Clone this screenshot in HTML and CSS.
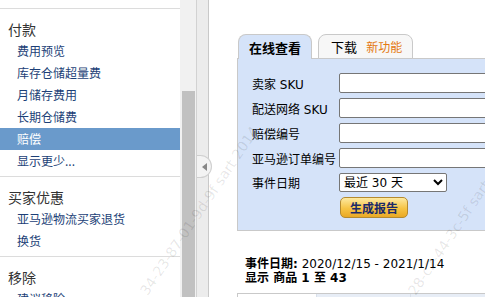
FILE: index.html
```html
<!DOCTYPE html>
<html>
<head>
    <title>赔偿</title>
    <link rel="stylesheet" href="styles.css">
</head>
<body>
    <!-- 左侧菜单 -->
    <div class="sidebar">
        <div class="menu-section">
            <div class="menu-title">付款</div>
            <div class="menu-item">费用预览</div>
            <div class="menu-item">库存仓储超量费</div>
            <div class="menu-item">月储存费用</div>
            <div class="menu-item">长期仓储费</div>
            <div class="menu-item selected">赔偿</div>
            <div class="menu-item">显示更少...</div>
        </div>
        <div class="menu-section">
            <div class="menu-title">买家优惠</div>
            <div class="menu-item">亚马逊物流买家退货</div>
            <div class="menu-item">换货</div>
        </div>
        <div class="menu-section">
            <div class="menu-title">移除</div>
            <div class="menu-item">建议移除</div>
        </div>
    </div>

    <div class="scrollbar">
        <div class="scroll-thumb"></div>
    </div>

    <div class="splitter"></div>
    <div class="collapse-handle"><span class="arrow-left"></span></div>

    <!-- 报告区域 -->
    <div class="main">
        <div class="tabs">
            <div class="tab active">在线查看</div>
            <div class="tab">下载 <span class="new-feature">新功能</span></div>
        </div>
        <div class="panel">
            <div class="form-grid">
                <label>卖家 SKU</label>
                <input type="text">
                <label>配送网络 SKU</label>
                <input type="text">
                <label>赔偿编号</label>
                <input type="text">
                <label>亚马逊订单编号</label>
                <input type="text">
                <label>事件日期</label>
                <select>
                    <option>最近 30 天</option>
                </select>
                <span></span>
                <div><button class="report-btn">生成报告</button></div>
            </div>
        </div>

        <div class="summary">
            <div><b>事件日期:</b> 2020/12/15 - 2021/1/14</div>
            <div><b>显示 商品 1 至 43</b></div>
        </div>

        <div class="table-head">
            <div class="th"></div>
            <div class="th blue"></div>
            <div class="th blue"></div>
        </div>
    </div>

    <!-- 水印 -->
    <span class="watermark wm-1">34-23-87-01-9d-9f sart 2014</span>
    <span class="watermark wm-2">9f sart 20114</span>
    <span class="watermark wm-3">28-c2-44-3c-5f sart</span>
</body>
</html>
```

FILE: styles.css
```css
body {
    margin: 0;
    height: 297px;
    overflow: hidden;
    display: flex;
    font-family: 'DejaVu Sans', 'Noto Sans CJK SC', sans-serif;
    font-size: 12px;
    color: #000;
    background-color: #fff;
}

/* 左侧菜单 */
.sidebar {
    width: 180px;
    flex-shrink: 0;
    padding-top: 8px;
    font-family: 'Noto Sans CJK SC', sans-serif;
}

.menu-section {
    border-top: 1px solid #dcdcdc;
    padding: 9px 0 4px;
}

.menu-title {
    font-size: 14px;
    line-height: 22px;
    color: #333;
    padding-left: 8px;
}

.menu-item {
    line-height: 22px;
    padding-left: 17px;
    color: #1c3f77;
}

.menu-item.selected {
    background-color: #6a9acb;
    color: #fff;
}

.scrollbar {
    width: 16px;
    flex-shrink: 0;
    background-color: #f1f1f1;
    padding-top: 91px;
    box-sizing: border-box;
}

.scroll-thumb {
    width: 13px;
    height: 260px;
    margin-left: 2px;
    background-color: #c1c1c1;
}

.splitter {
    width: 11px;
    flex-shrink: 0;
    background-color: #ececec;
    border-left: 1px solid #d2d2d2;
    border-right: 1px solid #c9c9c9;
}

.collapse-handle {
    position: absolute;
    left: 197px;
    top: 155px;
    width: 15px;
    height: 23px;
    box-sizing: border-box;
    background-color: #f3f3f3;
    border: 1px solid #cfcfcf;
    border-left: none;
    border-radius: 0 12px 12px 0;
    display: flex;
    align-items: center;
    padding-left: 5px;
}

.arrow-left {
    width: 0;
    height: 0;
    border-top: 4px solid transparent;
    border-bottom: 4px solid transparent;
    border-right: 5px solid #888;
}

/* 报告区域 */
.main {
    flex: 1;
    padding: 34px 0 0 28px;
    min-width: 0;
}

.tabs {
    display: flex;
    gap: 6px;
    margin-left: 1px;
    margin-bottom: -1px;
}

.tab {
    font-size: 13px;
    line-height: 16px;
    padding: 5px 10px 2px 12px;
    border: 1px solid #c9c9c9;
    border-radius: 8px 8px 0 0;
    background-color: #f7f7f7;
    white-space: nowrap;
}

.tab.active {
    position: relative;
    z-index: 1;
    padding: 5px 10px 3px 10px;
    border-bottom: none;
    background-color: #d5e3f9;
    font-weight: bold;
    font-family: 'Noto Sans CJK SC', sans-serif;
}

.new-feature {
    font-size: 12px;
    color: #e47911;
    margin-left: 5px;
}

.panel {
    width: 300px;
    border: 1px solid #c9c9c9;
    background-color: #d5e3f9;
    padding: 14px 0 12px 14px;
}

.form-grid {
    display: grid;
    grid-template-columns: 87px 1fr;
    row-gap: 5px;
    align-items: center;
}

.form-grid label {
    white-space: nowrap;
}

input[type="text"] {
    height: 20px;
    box-sizing: border-box;
    border: 1px solid #767676;
    border-radius: 2px;
    background-color: #fff;
    margin: 0;
}

select {
    width: 108px;
    height: 19px;
    margin: 0;
    font-family: inherit;
    font-size: 12px;
    border: 1px solid #767676;
    border-radius: 2px;
    background-color: #fff;
}

.report-btn {
    width: 68px;
    height: 21px;
    margin-left: 1px;
    padding: 0;
    font-family: 'Noto Sans CJK SC', sans-serif;
    font-size: 12px;
    font-weight: bold;
    color: #1b2a69;
    background: linear-gradient(#fde9a0, #f6c445 55%, #eaa925);
    border: 1px solid #b48a30;
    border-radius: 5px;
}

.summary {
    margin-top: 26px;
    padding-left: 8px;
    font-size: 12px;
    line-height: 14px;
}

.table-head {
    display: flex;
    margin-top: 8px;
    height: 40px;
    width: 300px;
    border-top: 1px solid #c9c9c9;
}

.th {
    border-left: 1px solid #c9c9c9;
    width: 78px;
}

.th.blue {
    width: 93px;
    background-color: #e7edf6;
    border-left-color: #d9e0ea;
}

/* 水印 */
.watermark {
    position: absolute;
    font-family: 'DejaVu Sans', sans-serif;
    font-size: 14px;
    line-height: 16px;
    color: rgba(0, 0, 0, 0.1);
    white-space: nowrap;
    transform-origin: 0 100%;
    transform: rotate(-56deg);
}

.wm-1 {
    left: 150px;
    top: 282px;
}

.wm-2 {
    left: -60px;
    top: 160px;
}

.wm-3 {
    left: 418px;
    top: 282px;
}
```
